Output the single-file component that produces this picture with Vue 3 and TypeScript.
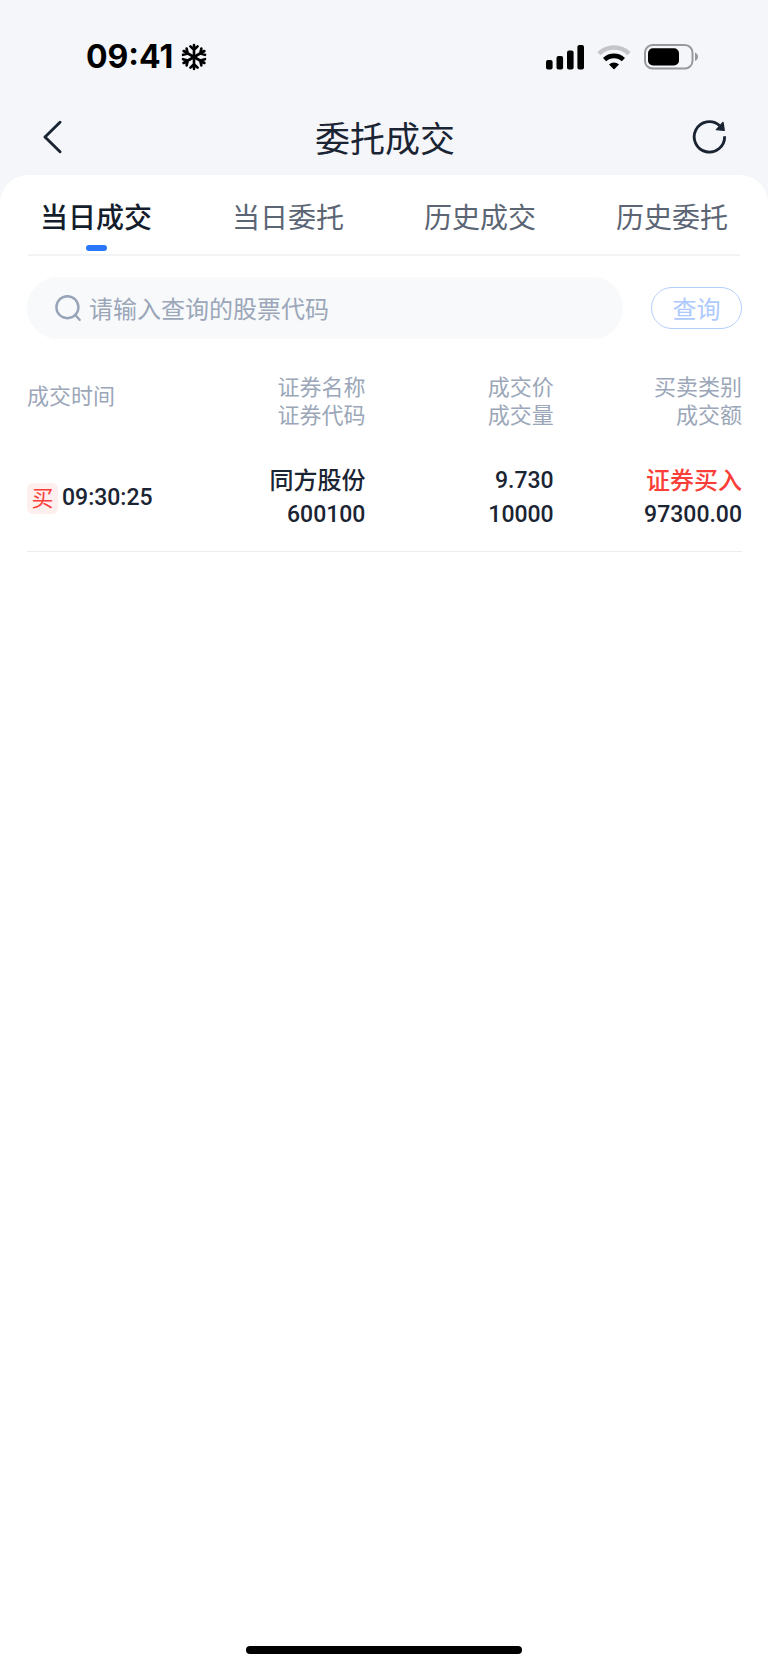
<script setup lang="ts">
import { ref } from 'vue'

interface Deal {
  side: string
  time: string
  name: string
  code: string
  price: string
  volume: string
  kind: string
  amount: string
}

const tabs: string[] = ['当日成交', '当日委托', '历史成交', '历史委托']
const active = ref<number>(0)
const keyword = ref<string>('')

const columns: string[][] = [
  ['成交时间'],
  ['证券名称', '证券代码'],
  ['成交价', '成交量'],
  ['买卖类别', '成交额'],
]

const deals: Deal[] = [
  {
    side: '买',
    time: '09:30:25',
    name: '同方股份',
    code: '600100',
    price: '9.730',
    volume: '10000',
    kind: '证券买入',
    amount: '97300.00',
  },
]
</script>

<template>
  <div class="screen">
    <div class="status">
      <div class="clock">
        <span>09:41</span>
        <svg width="26" height="28" viewBox="-13 -14 26 28" aria-hidden="true">
          <g fill="none" stroke="#000" stroke-width="2.6" stroke-linecap="round" stroke-linejoin="round">
            <g v-for="a in [0, 60, 120, 180, 240, 300]" :key="a" :transform="`rotate(${a})`">
              <path d="M0 0V-12M-3.6 -10.6L0 -7.2L3.6 -10.6" />
            </g>
          </g>
        </svg>
      </div>
      <div class="indicators">
        <svg width="38" height="25" viewBox="0 0 38 25" aria-hidden="true">
          <rect x="0" y="15" width="6.6" height="9.6" rx="2" />
          <rect x="10.5" y="11" width="6.6" height="13.6" rx="2" />
          <rect x="21" y="5.5" width="6.6" height="19.1" rx="2" />
          <rect x="31.4" y="0" width="6.6" height="24.6" rx="2" />
        </svg>
        <svg width="34" height="25" viewBox="0 0 34 25" aria-hidden="true">
          <path d="M2 8.6A21.6 21.6 0 0 1 32 8.6" fill="none" stroke="#c4c4c9" stroke-width="4.6" />
          <path d="M7.6 14.6A13.6 13.6 0 0 1 26.4 14.6" fill="none" stroke="#000" stroke-width="4.6" />
          <path d="M17 24.6L12 19.4A7.4 7.4 0 0 1 22 19.4Z" />
        </svg>
        <svg width="54" height="26" viewBox="0 0 54 26" aria-hidden="true">
          <rect x="1" y="1" width="47.5" height="23.5" rx="7.6" fill="none" stroke="#98989c" stroke-width="2" />
          <rect x="4" y="4.2" width="31" height="17.2" rx="5" />
          <path d="M51 8.6C53 9.6 54 11 54 12.8S53 16 51 17Z" fill="#98989c" />
        </svg>
      </div>
    </div>

    <header class="bar">
      <button class="icon" type="button" aria-label="返回">
        <svg width="20" height="34" viewBox="0 0 20 34" aria-hidden="true">
          <path d="M18 2.2L3 17L18 31.8" fill="none" stroke="#1b2433" stroke-width="2.9" stroke-linecap="round" stroke-linejoin="round" />
        </svg>
      </button>
      <h1>委托成交</h1>
      <button class="icon" type="button" aria-label="刷新">
        <svg width="36" height="36" viewBox="0 0 36 36" aria-hidden="true">
          <path d="M32.6 17.2A15.2 15.2 0 1 1 27.6 6.6" fill="none" stroke="#1b2433" stroke-width="2.9" />
          <path d="M31 3.4L32.2 11.4L24.4 10.6Z" fill="#1b2433" stroke="#1b2433" stroke-width="1.4" stroke-linejoin="round" />
        </svg>
      </button>
    </header>

    <main class="panel">
      <nav class="tabs" role="tablist">
        <button
          v-for="(tab, i) in tabs"
          :key="tab"
          type="button"
          role="tab"
          class="tab"
          :class="{ on: i === active }"
          :aria-selected="i === active"
          @click="active = i"
        >
          <span>{{ tab }}</span>
          <i class="mark"></i>
        </button>
      </nav>

      <form class="search" @submit.prevent>
        <label class="field">
          <svg width="26" height="26" viewBox="0 0 26 26" aria-hidden="true">
            <g fill="none" stroke="#97a3b6" stroke-width="2.4" stroke-linecap="round">
              <circle cx="12.4" cy="12.2" r="11" />
              <path d="M20 19.8L24.6 24.8" />
            </g>
          </svg>
          <input v-model="keyword" type="text" placeholder="请输入查询的股票代码" aria-label="请输入查询的股票代码" />
        </label>
        <button class="query" type="submit">查询</button>
      </form>

      <div class="list">
        <table>
          <thead>
            <tr>
              <th v-for="(col, i) in columns" :key="i" scope="col">
                <div v-for="line in col" :key="line">{{ line }}</div>
              </th>
            </tr>
          </thead>
          <tbody>
            <tr v-for="deal in deals" :key="deal.code">
              <td>
                <div class="when">
                  <span class="side">{{ deal.side }}</span>
                  <span>{{ deal.time }}</span>
                </div>
              </td>
              <td>
                <div class="han">{{ deal.name }}</div>
                <div>{{ deal.code }}</div>
              </td>
              <td>
                <div>{{ deal.price }}</div>
                <div>{{ deal.volume }}</div>
              </td>
              <td>
                <div class="han buy">{{ deal.kind }}</div>
                <div>{{ deal.amount }}</div>
              </td>
            </tr>
          </tbody>
        </table>
      </div>

      <div class="home"></div>
    </main>
  </div>
</template>

<style>
body {
  background: #f4f6fa;
}
</style>

<style scoped>
* {
  box-sizing: border-box;
}
.screen {
  min-height: 100vh;
  display: flex;
  flex-direction: column;
  background: #f4f6fa;
  color: #1b2433;
  font-family: 'Noto Sans CJK SC', sans-serif;
}
button {
  border: 0;
  padding: 0;
  background: none;
  color: inherit;
  font-family: inherit;
  cursor: pointer;
}
svg {
  display: block;
  flex: none;
}
.status {
  display: flex;
  justify-content: space-between;
  align-items: center;
  height: 102px;
  padding: 12px 70px 0 86px;
  color: #000;
}
.clock {
  display: flex;
  align-items: center;
  gap: 8px;
  font: 700 32px/40px Inter, sans-serif;
}
.indicators {
  display: flex;
  align-items: center;
  gap: 13px;
}
.bar {
  display: flex;
  justify-content: space-between;
  align-items: center;
  height: 73px;
  padding: 0 40px 4px 42px;
}
.icon {
  width: 40px;
  height: 40px;
  display: flex;
  align-items: center;
}
.icon:last-child {
  justify-content: flex-end;
}
h1 {
  margin: 0;
  font-size: 35px;
  line-height: 40px;
  font-weight: 400;
}
.panel {
  flex: 1;
  display: flex;
  flex-direction: column;
  background: #fff;
  border-radius: 28px 28px 0 0;
}
.tabs {
  display: flex;
  height: 81px;
  background: linear-gradient(#f2f3f4, #f2f3f4) center bottom / calc(100% - 56px) 2px no-repeat;
}
.tab {
  flex: 1;
  display: flex;
  flex-direction: column;
  align-items: center;
  padding-top: 21px;
  font-size: 28px;
  line-height: 40px;
  color: #5b6574;
}
.tab.on {
  color: #141d2b;
  font-weight: 500;
}
.mark {
  width: 21px;
  height: 6px;
  margin-top: 9px;
  border-radius: 3px;
}
.on .mark {
  background: #2b77fb;
}
.search {
  display: flex;
  align-items: center;
  gap: 28px;
  padding: 21px 26px 0 27px;
}
.field {
  flex: 1;
  display: flex;
  align-items: center;
  gap: 8px;
  height: 62px;
  padding: 0 28px;
  border-radius: 31px;
  background: #f7f9fb;
}
input {
  flex: 1;
  min-width: 0;
  height: 40px;
  padding: 0;
  border: 0;
  outline: 0;
  background: none;
  color: #1b2433;
  font: 400 24px/40px 'Noto Sans CJK SC', sans-serif;
}
input::placeholder {
  color: #9ba7b9;
  opacity: 1;
}
.query {
  width: 91px;
  height: 42px;
  border: 1px solid #b5cffd;
  border-radius: 21px;
  font-size: 24px;
  line-height: 40px;
  color: #adc9fd;
}
.list {
  padding: 0 26px 0 27px;
}
table {
  width: 100%;
  table-layout: fixed;
  border-collapse: collapse;
}
th,
td {
  padding: 0;
  text-align: right;
}
th:first-child,
td:first-child {
  width: 21%;
  text-align: left;
}
th {
  height: 124px;
  padding-top: 2px;
  font: 400 22px/28px 'Liberation Sans', 'Noto Sans CJK SC', sans-serif;
  color: #9ba7b9;
}
th:first-child {
  padding-bottom: 10px;
}
td {
  height: 88px;
  padding-bottom: 17px;
  border-bottom: 1px solid #ebecee;
  font: 500 23px/34px Roboto, sans-serif;
}
.han {
  font-size: 24px;
  font-family: 'Liberation Sans', 'Noto Sans CJK SC', sans-serif;
}
.buy {
  color: #fb3e38;
}
.when {
  display: flex;
  align-items: center;
  gap: 4px;
}
.side {
  width: 31px;
  height: 31px;
  border-radius: 6px;
  background: #feefef;
  color: #fb3e38;
  text-align: center;
  font: 400 22px/31px 'Liberation Sans', 'Noto Sans CJK SC', sans-serif;
}
.home {
  width: 36%;
  height: 8px;
  margin: auto auto 15px;
  border-radius: 4px;
  background: #000;
}
</style>
